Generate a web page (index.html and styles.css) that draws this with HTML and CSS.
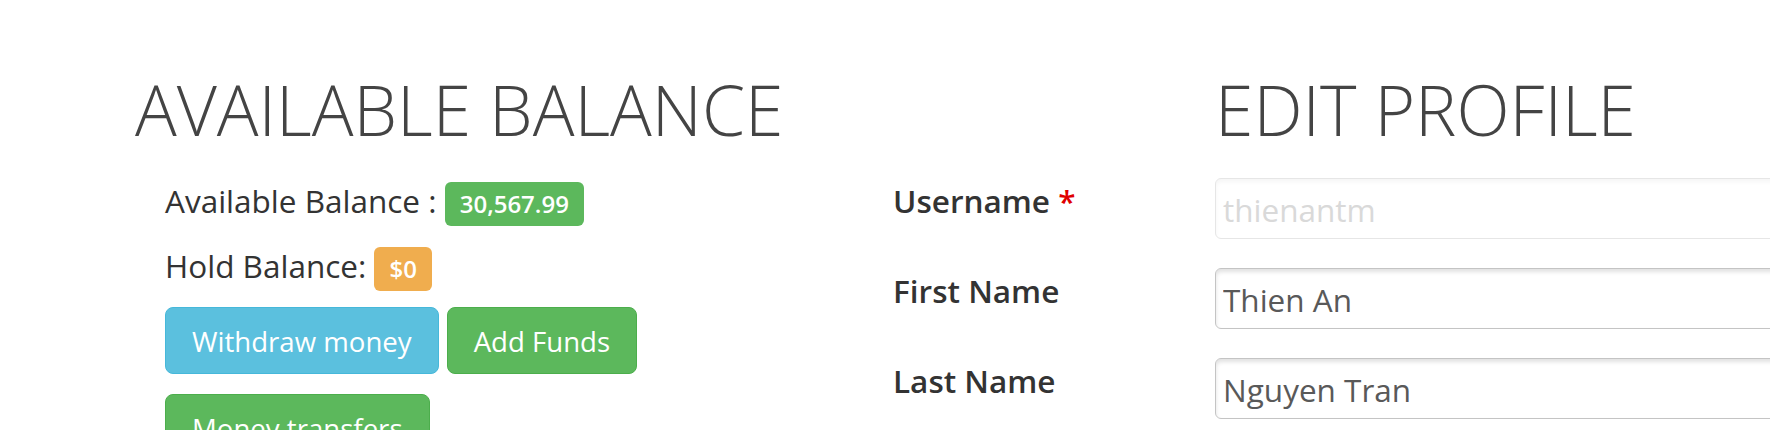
FILE: index.html
```html
<!DOCTYPE html>
<html lang="en">
<head>
<meta charset="utf-8">
<title>Account</title>
<link rel="stylesheet" href="styles.css">
</head>
<body>
<div class="page">
  <section class="balance">
    <h1 class="title">Available Balance</h1>
    <div class="balance-body">
      <div class="balance-row">Available Balance : <span class="badge badge-success">30,567.99</span></div>
      <div class="balance-row">Hold Balance: <span class="badge badge-warning">$0</span></div>
      <div class="actions">
        <a class="btn btn-info">Withdraw money</a>
        <a class="btn btn-success">Add Funds</a>
        <a class="btn btn-success">Money transfers</a>
      </div>
    </div>
  </section>
  <section class="profile">
    <h1 class="title title-profile">Edit Profile</h1>
    <form class="form">
      <div class="form-row">
        <label class="form-label">Username <span class="req">*</span></label>
        <input class="field field-readonly" type="text" value="thienantm" readonly>
      </div>
      <div class="form-row">
        <label class="form-label">First Name</label>
        <input class="field" type="text" value="Thien An">
      </div>
      <div class="form-row">
        <label class="form-label">Last Name</label>
        <input class="field" type="text" value="Nguyen Tran">
      </div>
    </form>
  </section>
</div>
</body>
</html>
```
FILE: styles.css
```css
html {
  overflow: hidden;
}
body {
  margin: 0;
  background: #fff;
  font-family: "Open Sans", "Liberation Sans", sans-serif;
  font-size: 31.5px;
  line-height: 45px;
  color: #333;
}
.page {
  display: flex;
  padding-top: 70.8px;
  width: 2200px;
}
.balance {
  width: 870px;
  flex: none;
  padding-left: 135px;
  box-sizing: border-box;
}
.title {
  margin: 0 0 30.8px;
  font-size: 69.5px;
  line-height: 1.1;
  font-weight: 300;
  text-transform: uppercase;
  color: #444;
  white-space: nowrap;
}
.balance-body {
  padding-left: 30px;
}
.balance-row {
  margin-bottom: 16.5px;
  white-space: nowrap;
}
.badge {
  display: inline-block;
  font-size: 24px;
  line-height: 24px;
  font-weight: 600;
  color: #fff;
  padding: 10px 15px 10px;
  border-radius: 6px;
  vertical-align: baseline;
}
.badge-success {
  background: #5cb85c;
}
.badge-warning {
  background: #f0ad4e;
}
.actions {
  width: 620px;
  display: flex;
  flex-wrap: wrap;
  gap: 20px 8px;
}
.btn {
  display: inline-block;
  font-size: 27.6px;
  line-height: 40px;
  padding: 12.5px 26px;
  border: 1px solid transparent;
  border-radius: 8px;
  color: #fff;
  white-space: nowrap;
}
.btn-info {
  background: #5bc0de;
  border-color: #46b8da;
}
.btn-success {
  background: #5cb85c;
  border-color: #4cae4c;
}
.profile {
  flex: none;
  padding-left: 23px;
}
.title-profile {
  margin-left: 322px;
}
.form {
  margin: 0;
}
.form-row {
  display: flex;
  align-items: flex-start;
  margin-bottom: 29px;
}
.form-label {
  width: 322px;
  flex: none;
  font-weight: 600;
  color: #333;
  line-height: 45px;
}
.req {
  color: #e00000;
}
.field {
  width: 700px;
  height: 61px;
  box-sizing: border-box;
  padding: 2px 7px 0;
  border: 1px solid #c4c4c4;
  border-radius: 6px;
  box-shadow: inset 0 3px 4px rgba(0, 0, 0, 0.12);
  font-family: "Open Sans", "Liberation Sans", sans-serif;
  font-size: 31.5px;
  color: #595959;
  background: #fff;
  outline: none;
}
.field-readonly {
  border-color: #e6e6e6;
  box-shadow: inset 0 3px 4px rgba(0, 0, 0, 0.04);
  color: #d9d9d9;
}
```
